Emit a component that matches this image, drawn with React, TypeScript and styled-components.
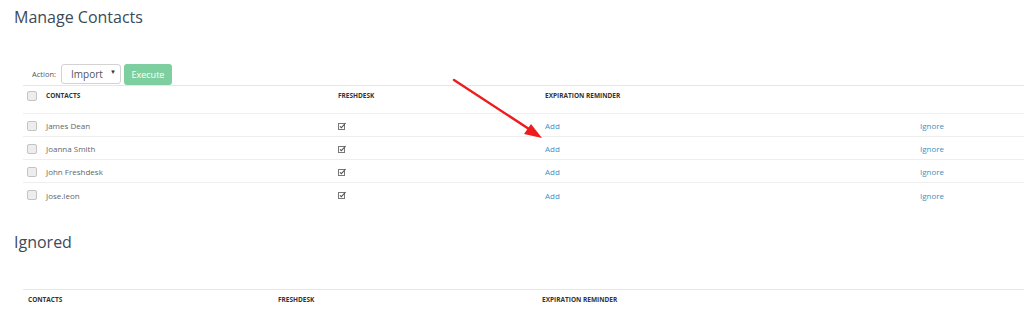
// React library
import React from "react";

// styled-component library for designing components
import styled, { createGlobalStyle } from "styled-components";

// -------------------- Custom Style using styled-component --------------------
const GlobalStyle = createGlobalStyle`
  body {
    margin: 0;
    background: #fff;
    font-family: "Open Sans", "Liberation Sans", sans-serif;
  }
`;

const Page = styled.div`
  position: relative;
  width: 1024px;
  height: 314px;
  overflow: hidden;
  padding: 0 0 0 14px;
  box-sizing: border-box;
`;

const Title = styled.h2<{ $top?: number }>`
  margin: ${(p) => p.$top ?? 0}px 0 0;
  padding-top: 7px;
  height: 24px;
  font-size: 16px;
  font-weight: 400;
  line-height: 20px;
  color: #3d4a57;
`;

const Section = styled.div<{ $top: number }>`
  margin-top: ${(p) => p.$top}px;
  margin-left: 9px;
`;

const Toolbar = styled.div`
  display: flex;
  align-items: center;
  gap: 3px;
  height: 22px;
  padding-left: 9px;
`;

const ActionLabel = styled.span`
  font-size: 7.5px;
  color: #555;
  margin-right: 2px;
`;

const SelectBox = styled.div`
  display: flex;
  align-items: center;
  justify-content: space-between;
  box-sizing: border-box;
  width: 60px;
  height: 20px;
  padding: 0 4px 0 9px;
  border: 1px solid #d3d3d3;
  border-radius: 3px;
  font-size: 10px;
  color: #555;
  margin-top: -1px;
`;

const Caret = styled.span`
  font-size: 6px;
  color: #333;
  margin-top: -3px;
`;

const ExecuteButton = styled.button`
  height: 21px;
  width: 48px;
  padding: 0;
  border: none;
  border-radius: 3px;
  background: #7ecfa0;
  color: #fff;
  font-family: inherit;
  font-size: 9px;
  margin-top: 1px;
`;

const Table = styled.div<{ $cols: string; $indent?: number }>`
  display: grid;
  grid-template-columns: ${(p) => p.$cols};
  padding-left: ${(p) => p.$indent ?? 0}px;
  border-top: 1px solid #e6e6e6;
`;

const HeadCell = styled.div<{ $h: number; $line?: boolean }>`
  height: ${(p) => p.$h}px;
  padding-top: 5px;
  box-sizing: border-box;
  font-size: 6.5px;
  font-weight: 700;
  color: #333;
  line-height: 9px;
  border-bottom: ${(p) => (p.$line ? "1px solid #eeeeee" : "none")};
`;

const Cell = styled.div<{ $link?: boolean; $last?: boolean }>`
  height: 23px;
  display: flex;
  align-items: center;
  box-sizing: border-box;
  border-bottom: ${(p) => (p.$last ? "none" : "1px solid #eeeeee")};
  font-size: 8px;
  color: ${(p) => (p.$link ? "#3d8fc6" : "#666")};
  padding-top: 1px;
`;

const Box = styled.span`
  display: inline-block;
  width: 8px;
  height: 8px;
  margin-left: 4px;
  border: 1px solid #c4c4c4;
  border-radius: 2px;
  background: #ededed;
`;

const Arrow = styled.svg`
  position: absolute;
  left: 440px;
  top: 70px;
  pointer-events: none;
`;
// -------------------- Custom Style using styled-component --------------------

interface Contact {
  name: string;
}

const contacts: Contact[] = [
  { name: "James Dean" },
  { name: "Joanna Smith" },
  { name: "John Freshdesk" },
  { name: "Jose.leon" },
];

const CheckIcon = (): JSX.Element => (
  <svg width="9" height="8" viewBox="0 0 9 8">
    <rect x="0.5" y="1.5" width="6" height="6" fill="none" stroke="#777" strokeWidth="1" />
    <path d="M1.9 4.3 L3.4 5.7 L7.6 1" fill="none" stroke="#555" strokeWidth="1.1" />
  </svg>
);

const App = (): JSX.Element => {
  const mainCols = "23px 292px 207px 375px 1fr";
  const ignoredCols = "250px 264px 1fr";

  return (
    <Page>
      <GlobalStyle />
      <Title>Manage Contacts</Title>

      <Section $top={32}>
        <Toolbar>
          <ActionLabel>Action:</ActionLabel>
          <SelectBox>
            Import
            <Caret>▼</Caret>
          </SelectBox>
          <ExecuteButton>Execute</ExecuteButton>
        </Toolbar>
        <Table $cols={mainCols}>
          <HeadCell $h={28} $line>
            <Box />
          </HeadCell>
          <HeadCell $h={28} $line>CONTACTS</HeadCell>
          <HeadCell $h={28} $line>FRESHDESK</HeadCell>
          <HeadCell $h={28} $line>EXPIRATION REMINDER</HeadCell>
          <HeadCell $h={28} $line />
          {contacts.map((contact, index) => {
            const last = index === contacts.length - 1;
            return (
              <React.Fragment key={contact.name}>
                <Cell $last={last}>
                  <Box />
                </Cell>
                <Cell $last={last}>{contact.name}</Cell>
                <Cell $last={last}>
                  <CheckIcon />
                </Cell>
                <Cell $link $last={last}>Add</Cell>
                <Cell $link $last={last}>Ignore</Cell>
              </React.Fragment>
            );
          })}
        </Table>
      </Section>

      <Title $top={19}>Ignored</Title>

      <Section $top={33}>
        <Table $cols={ignoredCols} $indent={5}>
          <HeadCell $h={20}>CONTACTS</HeadCell>
          <HeadCell $h={20}>FRESHDESK</HeadCell>
          <HeadCell $h={20}>EXPIRATION REMINDER</HeadCell>
        </Table>
      </Section>

      <Arrow width="120" height="80" viewBox="0 0 120 80">
        <line x1="14" y1="10" x2="92" y2="61" stroke="#ee1c1c" strokeWidth="2.4" strokeLinecap="round" />
        <polygon points="102,68 84,64 91,54" fill="#ee1c1c" />
      </Arrow>
    </Page>
  );
};

export default App;
